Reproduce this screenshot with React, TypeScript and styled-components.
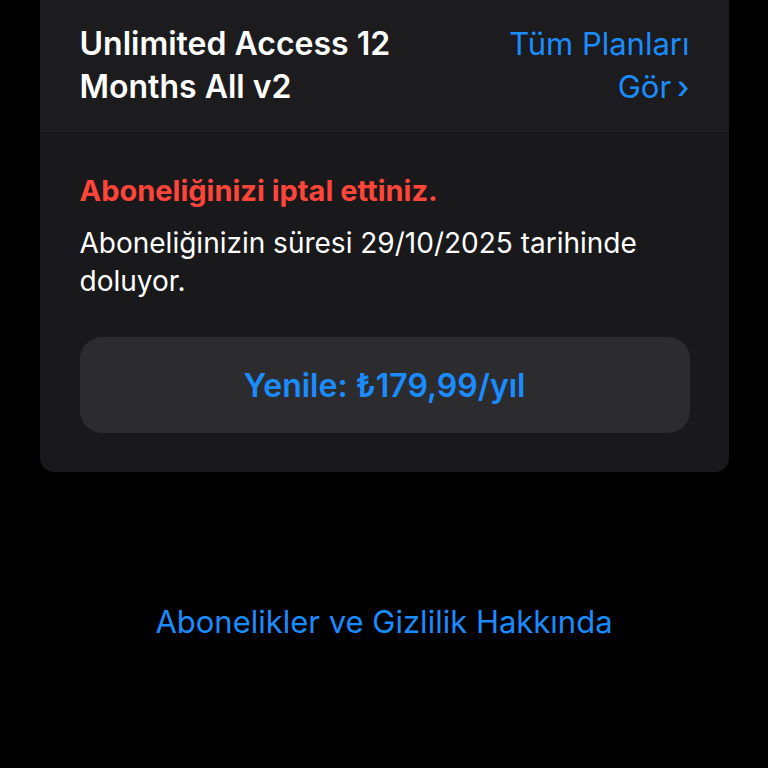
import styled, { createGlobalStyle } from "styled-components";

const Global = createGlobalStyle`
  html, body {
    margin: 0;
    padding: 0;
    background: #000;
  }
  body {
    font-family: Inter, "Noto Sans", "Liberation Sans", sans-serif;
    -webkit-font-smoothing: antialiased;
  }
`;

const Page = styled.div`
  width: 768px;
  height: 768px;
  overflow: hidden;
  background: #000;
  display: flex;
  flex-direction: column;
  align-items: center;
`;

const Card = styled.section`
  width: 689px;
  margin-top: -24px;
  border-radius: 14px;
  overflow: hidden;
  background: #19191b;
`;

const Header = styled.div`
  display: flex;
  justify-content: space-between;
  align-items: flex-start;
  padding: 46px 39px 23px 40px;
  background: #1c1c1e;
  border-bottom: 1px solid #202022;
`;

const PlanName = styled.h1`
  margin: 0;
  font-size: 32px;
  line-height: 43px;
  font-weight: 600;
  color: #fff;
`;

const AllPlans = styled.a`
  text-align: right;
  font-size: 31px;
  line-height: 43px;
  font-weight: 400;
  color: #1a8cff;
`;

const Chevron = styled.span`
  display: inline-block;
  margin-left: 6px;
  font-weight: 500;
`;

const Body = styled.div`
  display: flex;
  flex-direction: column;
  padding: 42px 39px 39px 40px;
`;

const Cancelled = styled.p`
  margin: 0;
  font-size: 29px;
  line-height: 34px;
  font-weight: 700;
  color: #ff453a;
`;

const Expiry = styled.p`
  margin: 16px 0 0;
  font-size: 28px;
  line-height: 38px;
  font-weight: 400;
  color: #fff;
`;

const RenewButton = styled.button`
  margin-top: 37px;
  height: 96px;
  border: none;
  border-radius: 22px;
  background: #2c2c2e;
  color: #1a8cff;
  font-family: inherit;
  font-size: 32px;
  font-weight: 600;
  cursor: pointer;
`;

const FooterLink = styled.a`
  margin-top: 130px;
  font-size: 31px;
  line-height: 40px;
  font-weight: 400;
  color: #1a8cff;
`;

export default function App() {
  return (
    <>
      <Global />
      <Page>
        <Card>
          <Header>
            <PlanName>
              Unlimited Access 12
              <br />
              Months All v2
            </PlanName>
            <AllPlans>
              Tüm Planları
              <br />
              Gör<Chevron>›</Chevron>
            </AllPlans>
          </Header>
          <Body>
            <Cancelled>Aboneliğinizi iptal ettiniz.</Cancelled>
            <Expiry>
              Aboneliğinizin süresi 29/10/2025 tarihinde
              <br />
              doluyor.
            </Expiry>
            <RenewButton>Yenile: ₺179,99/yıl</RenewButton>
          </Body>
        </Card>
        <FooterLink>Abonelikler ve Gizlilik Hakkında</FooterLink>
      </Page>
    </>
  );
}
